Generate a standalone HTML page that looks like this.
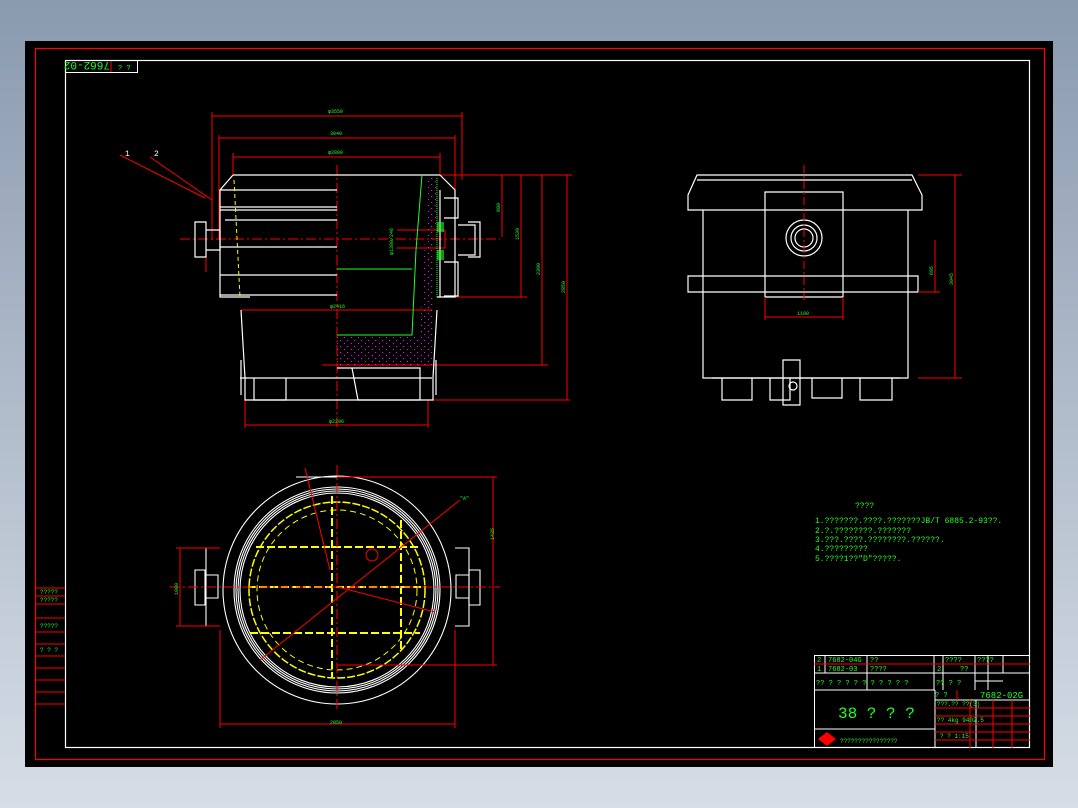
<!DOCTYPE html>
<html><head><meta charset="utf-8"><style>
html,body{margin:0;padding:0;width:1078px;height:808px;overflow:hidden;background:linear-gradient(#8a9aaf,#d6dde6);}
svg{position:absolute;left:0;top:0}
text{font-family:"Liberation Mono",monospace;}
</style></head><body>
<svg width="1078" height="808" viewBox="0 0 1078 808">
<defs>
<pattern id="dots" width="7" height="6" patternUnits="userSpaceOnUse">
<rect x="1" y="1" width="1" height="1" fill="#f0f"/><rect x="4" y="4" width="1.2" height="1" fill="#f0f"/>
</pattern>
</defs>
<rect x="25" y="41" width="1028" height="726" fill="#000"/>
<rect x="35.5" y="48.5" width="1009" height="711" fill="none" stroke="#f00" stroke-width="1.2"/>
<rect x="65.5" y="60.5" width="964" height="687" fill="none" stroke="#fff" stroke-width="1.2"/>
<rect x="65.5" y="60.5" width="72" height="12" fill="none" stroke="#fff"/>
<line x1="111" y1="61" x2="111" y2="72" stroke="#f00"/>
<text x="66" y="70" fill="#2f2" font-size="11" transform="rotate(180 88 66)">7662-02</text>
<text x="118" y="70" fill="#2f2" font-size="7">? ?</text>

<!-- left strip -->
<g stroke="#f00" stroke-width="1">
<line x1="35" y1="588" x2="65" y2="588"/><line x1="35" y1="596" x2="65" y2="596"/><line x1="35" y1="604" x2="65" y2="604"/>
<line x1="35" y1="618" x2="65" y2="618"/><line x1="35" y1="632" x2="65" y2="632"/><line x1="35" y1="644" x2="65" y2="644"/>
<line x1="35" y1="656" x2="65" y2="656"/><line x1="35" y1="668" x2="65" y2="668"/><line x1="35" y1="680" x2="65" y2="680"/>
<line x1="35" y1="692" x2="65" y2="692"/><line x1="35" y1="704" x2="65" y2="704"/>
</g>
<g fill="#2f2" font-size="6"><text x="40" y="594">?????</text><text x="40" y="602">?????</text><text x="40" y="628">?????</text><text x="40" y="652">? ? ?</text></g>

<!-- FRONT VIEW -->
<g stroke="#f00" stroke-width="1" fill="none">
<path d="M212 112V240M462 112V180M212 116H462"/>
<path d="M219 135V240M455 135V222M219 138H455"/>
<path d="M233 153V175M440 153V175M233 157H440"/>
<path d="M245 400V428M428 400V428M245 425H428"/>
<path d="M440 175H572M440 297H527M322 365H548M420 400H570"/>
<path d="M502 175V237M521 175V297M542 175V365M567 175V400"/>
<path d="M241 310H432"/>
<path d="M120 155L205 198M150 157L212 200"/>
<path d="M397 230H445V248H397"/>
<path d="M206 236V272"/>
</g>
<line x1="180" y1="239" x2="500" y2="239" stroke="#f00" stroke-dasharray="10 3 2 3"/>
<line x1="337" y1="165" x2="337" y2="430" stroke="#f00" stroke-dasharray="10 3 2 3"/>
<path d="M428 178L420 335L418 365H432L437 178Z" fill="url(#dots)"/>
<path d="M337 335H420V365H337Z" fill="url(#dots)"/>
<g stroke="#fff" stroke-width="1.2" fill="none">
<path d="M233 175H440M233 175L220 190V297H250M220 190H337M220 207H337M220 210H337M225 220H337M220 247H337M220 275H337M220 295H337"/>
<path d="M241 310L245 378V400H433V378L437 310"/>
<path d="M240 378H432M254 378V400H286V378M337 368H420V400H358L352 368"/>
<path d="M440 175L455 190V297H437M440 190V297M444 198H458V218H444M444 262H458V296H444M458 225H475V255H458M468 222H480V257H468"/>
<path d="M195 222H206V257H195ZM206 230H220V250H206Z"/>
<path d="M241 360V395M436 360V395"/>
</g>
<path d="M422 175L416 250L412 335H337M412 269H337" stroke="#2f2" fill="none"/>
<path d="M437 178V297" stroke="#2f2" stroke-dasharray="1 1"/>
<path d="M437 222H444V232H437ZM437 250H444V260H437Z" fill="#2f2" opacity=".6"/>
<path d="M234 180L240 297" stroke="#ff0" stroke-dasharray="4 3"/>
<g fill="#2f2" font-size="5"><text x="328" y="113">φ3550</text><text x="330" y="135">3040</text><text x="328" y="154">φ2800</text><text x="330" y="308">φ2416</text><text x="329" y="423">φ2296</text></g>
<g fill="#2f2" font-size="5"><text transform="translate(500 212) rotate(-90)">800</text><text transform="translate(519 240) rotate(-90)">1530</text><text transform="translate(540 275) rotate(-90)">2300</text><text transform="translate(565 293) rotate(-90)">2850</text><text transform="translate(393 255) rotate(-90)">φ1380/246</text></g>
<text x="125" y="156" fill="#fff" font-size="8">1</text><text x="154" y="156" fill="#fff" font-size="8">2</text>

<!-- SIDE VIEW -->
<g stroke="#fff" stroke-width="1.2" fill="none">
<path d="M697 175H912L922 195V210H688V195Z M697 180H912"/>
<path d="M703 210V378H908V210"/>
<path d="M688 276H918V292H688Z"/>
<path d="M765 192H843V297H765Z"/>
<circle cx="804" cy="238" r="18"/><circle cx="804" cy="238" r="13"/><circle cx="804" cy="238" r="9"/>
<path d="M712 378H900M722 378V400H752V378M860 378V400H892V378M812 378V398H842V378M770 378V400H790V378"/>
<path d="M783 360H800V405H783Z"/><circle cx="793" cy="386" r="4"/>
</g>
<g stroke="#f00" fill="none"><path d="M765 297V320M843 297V320M765 317H843M918 175H962M918 378H962M955 175V378M918 292H940M935 240V292"/><path d="M804 165V300" stroke-dasharray="8 3 2 3"/></g>
<g fill="#2f2" font-size="5"><text x="797" y="315">1100</text><text transform="translate(953 285) rotate(-90)">3045</text><text transform="translate(933 275) rotate(-90)">695</text></g>

<!-- PLAN VIEW -->
<g stroke="#fff" stroke-width="1.1" fill="none">
<circle cx="337" cy="590" r="114"/><circle cx="337" cy="590" r="103"/><circle cx="337" cy="590" r="101"/><circle cx="337" cy="590" r="99"/><circle cx="337" cy="590" r="97"/>
<path d="M220 548H206V626H220M455 548H469V626H455"/>
<path d="M195 570H205V605H195ZM205 575H218V598H205ZM469 570H480V605H469ZM456 575H469V598H456Z"/>
<path d="M296 477H378"/>
</g>
<circle cx="337" cy="590" r="88" stroke="#ff0" stroke-width="1.5" fill="none" stroke-dasharray="8 2"/>
<circle cx="337" cy="590" r="80" stroke="#ff0" fill="none" stroke-dasharray="6 4"/>
<g stroke="#ff0" stroke-width="2" stroke-dasharray="8 3"><path d="M256 547H420M248 587H426M250 633H420M332 496V677M401 520V652"/></g>
<g stroke="#f00" fill="none"><path d="M170 587H500M337 465V710" stroke-dasharray="10 3 2 3"/>
<path d="M260 660L460 500M305 468L330 570M338 587L435 612M176 548H220M176 626H220M180 548V626M220 630V728M455 630V728M220 724H455M337 477H497M337 665H497M493 477V665"/>
<circle cx="372" cy="555" r="6"/></g>
<g fill="#2f2" font-size="5"><text x="330" y="724">2050</text><text transform="translate(178 595) rotate(-90)">1000</text><text transform="translate(494 540) rotate(-90)">1435</text><text x="460" y="500">"A"</text></g>

<!-- NOTES -->
<g fill="#2f2" font-size="8">
<text x="855" y="508">????</text>
<text x="815" y="523">1.???????.????.???????JB/T 6885.2-93??.</text>
<text x="815" y="533">2.?.????????.???????</text>
<text x="815" y="542">3.???.????.????????.??????.</text>
<text x="815" y="551">4.?????????</text>
<text x="815" y="561">5.????1??"D"?????.</text>
</g>

<!-- TITLE BLOCK -->
<g stroke="#fff" stroke-width="1" fill="none">
<rect x="814.5" y="655.5" width="215" height="92"/>
<path d="M814 673H1030M814 690H935M935 690V748M825 656V673M867 656V690M934 656V690M943 656V690M975 656V690M988 656V690M1003 656V673M975 681H1003M814 729H935M935 700H1030M976 700V748"/>
</g>
<g stroke="#f00" stroke-width="1"><path d="M814 664H1030M957 690V700M970 700V748M993 700V748M1012 700V748M935 708H1030M935 716H1030M935 724H1030M935 732H1030M935 740H1030"/></g>
<g fill="#2f2" font-size="7">
<text x="817" y="662">2</text><text x="828" y="662">7682-04G</text><text x="870" y="662">??</text><text x="945" y="662">????</text><text x="977" y="662">????</text>
<text x="817" y="671">1</text><text x="828" y="671">7682-03</text><text x="870" y="671">????</text><text x="937" y="671">2</text><text x="960" y="671">??</text>
<text x="816" y="685">?? ? ? ? ? ?   ? ? ? ? ?</text><text x="936" y="685">?? ?  ?</text>
<text x="935" y="697">?  ?</text><text x="980" y="698" font-size="9">7682-02G</text>
<text x="937" y="706" font-size="6">???.?? ??(3)</text><text x="937" y="722" font-size="6">?? 4kg 9402.5</text><text x="940" y="738" font-size="6">?  ?   1:15</text>
</g>
<text x="838" y="718" fill="#2f2" font-size="16">38 ? ? ?</text>
<path d="M818 739L827 732L836 739L827 746Z" fill="#f00"/>
<text x="840" y="743" fill="#2f2" font-size="6">????????????????</text>
</svg>
</body></html>
